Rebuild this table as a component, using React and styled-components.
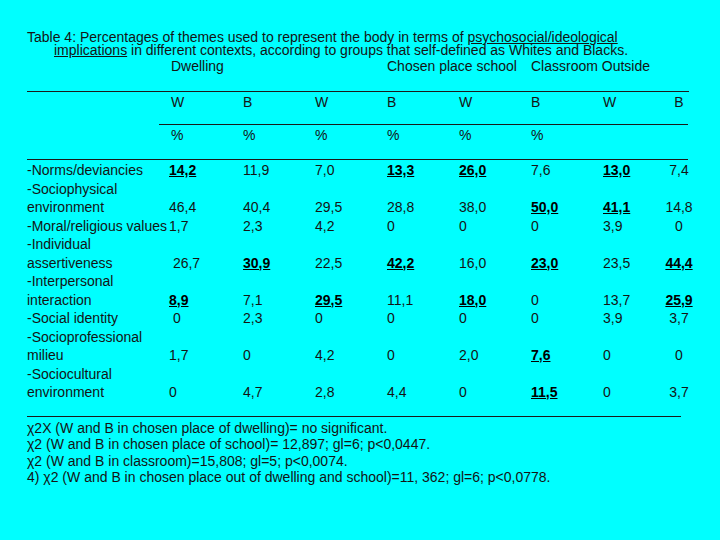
import React from "react";
import styled, { createGlobalStyle } from "styled-components";

const GlobalStyle = createGlobalStyle`
  html, body {
    margin: 0;
    padding: 0;
    background: #00ffff;
  }
  body {
    font-family: "Liberation Sans", Arial, sans-serif;
    color: #141414;
  }
`;

const rows = [
  { label: ["-Norms/deviancies"], values: ["14,2*", "11,9", "7,0", "13,3*", "26,0*", "7,6", "13,0*", "7,4"] },
  { label: ["-Sociophysical", "environment"], values: ["46,4", "40,4", "29,5", "28,8", "38,0", "50,0*", "41,1*", "14,8"] },
  { label: ["-Moral/religious values"], values: ["1,7", "2,3", "4,2", "0", "0", "0", "3,9", "0"] },
  { label: ["-Individual", "assertiveness"], values: [" 26,7", "30,9*", "22,5", "42,2*", "16,0", "23,0*", "23,5", "44,4*"] },
  { label: ["-Interpersonal", "interaction"], values: ["8,9*", "7,1", "29,5*", "11,1", "18,0*", "0", "13,7", "25,9*"] },
  { label: ["-Social identity"], values: [" 0", "2,3", "0", "0", "0", "0", "3,9", "3,7"] },
  { label: ["-Socioprofessional", "milieu"], values: ["1,7", "0", "4,2", "0", "2,0", "7,6*", "0", "0"] },
  { label: ["-Sociocultural", "environment"], values: ["0", "4,7", "2,8", "4,4", "0", "11,5*", "0", "3,7"] },
];

const notes = [
  "χ2X (W and B in chosen place of dwelling)= no significant.",
  "χ2 (W and B in chosen place of school)= 12,897; gl=6; p<0,0447.",
  "χ2 (W and B in classroom)=15,808; gl=5; p<0,0074.",
  "4) χ2 (W and B in chosen place out of dwelling and school)=11, 362; gl=6; p<0,0778.",
];

export default function App() {
  return (
    <>
      <GlobalStyle />
      <Page>
        <Caption>
          Table 4: Percentages of themes used to represent the body in terms of{" "}
          <Under>psychosocial/ideological</Under>
          <br />
          <Under>implications</Under> in different contexts, according to groups that self-defined as Whites and Blacks.
        </Caption>

        <HeadRow>
          <Cell $col={2}>Dwelling</Cell>
          <Cell $col={5}>Chosen place school</Cell>
          <Cell $col={7}>Classroom Outside</Cell>
        </HeadRow>

        <Rule $gap={16} $indent={0} $width={662} />
        <HeadRow>
          {["W", "B", "W", "B", "W", "B", "W", "B"].map((g, i) => (
            <Cell key={i} $col={i + 2} $center={i === 7}>{g}</Cell>
          ))}
        </HeadRow>

        <Rule $gap={13} $indent={132} $width={529} />
        <HeadRow>
          {["%", "%", "%", "%", "%", "%"].map((g, i) => (
            <Cell key={i} $col={i + 2}>{g}</Cell>
          ))}
        </HeadRow>

        <Rule $gap={15} $indent={0} $width={661} />
        <Body>
          {rows.map((row, r) => (
            <DataRow key={r}>
              <Label>
                {row.label.map((l) => <div key={l}>{l}</div>)}
              </Label>
              {row.values.map((v, i) => {
                const strong = v.endsWith("*");
                return (
                  <Value key={i} $col={i + 2} $center={i === 7}>
                    {strong ? <Strong>{v.slice(0, -1)}</Strong> : v}
                  </Value>
                );
              })}
            </DataRow>
          ))}
        </Body>

        <Rule $gap={14} $indent={0} $width={654} />
        <Notes>
          {notes.map((n) => <div key={n}>{n}</div>)}
        </Notes>
      </Page>
    </>
  );
}

const Page = styled.div`
  width: 720px;
  min-height: 540px;
  box-sizing: border-box;
  padding: 31px 0 0 27px;
  background: #00ffff;
`;

const Caption = styled.p`
  margin: 0;
  padding-left: 27px;
  text-indent: -27px;
  font-size: 14px;
  line-height: 12.5px;
  white-space: nowrap;
`;

const Under = styled.span`
  text-decoration: underline;
`;

const grid = `
  display: grid;
  grid-template-columns: 144px repeat(6, 72px) 62px 28px;
  font-size: 14px;
`;

const HeadRow = styled.div`
  ${grid}
  line-height: 18px;
  margin-top: 1px;
`;

const Cell = styled.div`
  grid-column: ${(p) => p.$col};
  grid-row: 1;
  white-space: nowrap;
  text-align: ${(p) => (p.$center ? "center" : "left")};
`;

const Rule = styled.div`
  height: 1px;
  background: #1a1a1a;
  margin-top: ${(p) => p.$gap}px;
  margin-left: ${(p) => p.$indent}px;
  width: ${(p) => p.$width}px;
`;

const Body = styled.div`
  padding-top: 1px;
`;

const DataRow = styled.div`
  ${grid}
  grid-template-columns: 142px 74px repeat(5, 72px) 62px 28px;
  line-height: 18.5px;
`;

const Label = styled.div`
  grid-column: 1;
  white-space: nowrap;
`;

const Value = styled.div`
  grid-column: ${(p) => p.$col};
  align-self: end;
  white-space: pre;
  text-align: ${(p) => (p.$center ? "center" : "left")};
`;

const Strong = styled.span`
  font-weight: bold;
  text-decoration: underline;
  color: #000;
`;

const Notes = styled.div`
  margin-top: 3px;
  font-size: 14px;
  line-height: 16.6px;
  white-space: nowrap;
`;
